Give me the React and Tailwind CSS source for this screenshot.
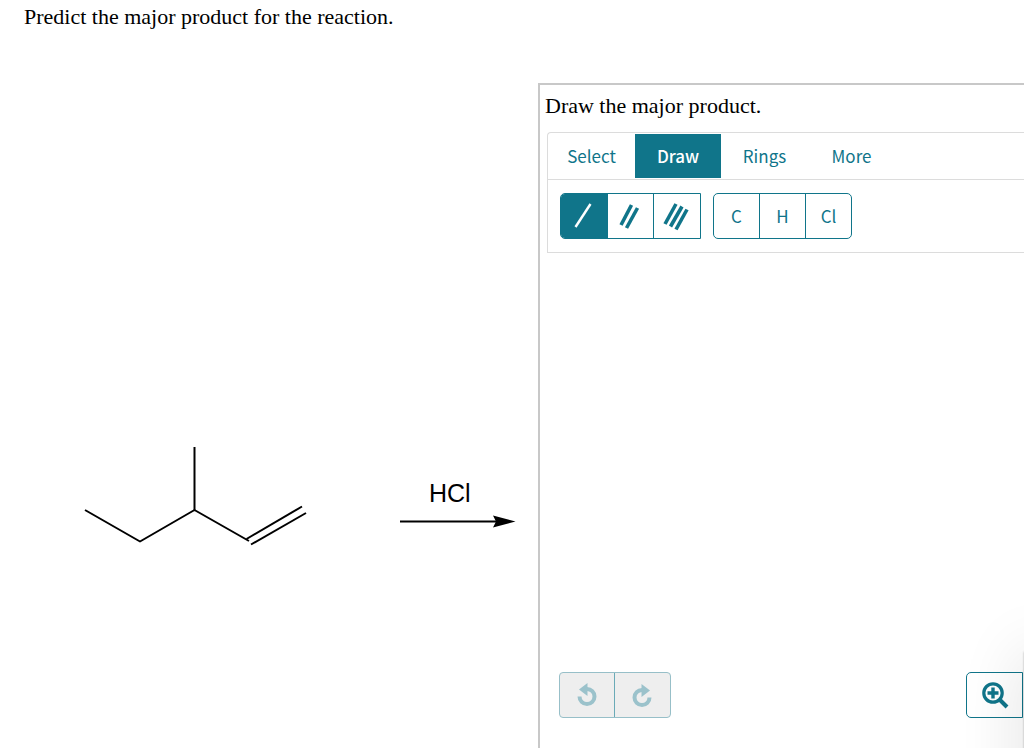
import { useState } from "react";

const tabs = ["Select", "Draw", "Rings", "More"];

const bonds = [
  { name: "Single bond", lines: [[5.5, 27, 20.5, 4]], width: 2.4 },
  { name: "Double bond", lines: [[4, 25, 14.5, 5], [9.5, 28, 20.5, 8]], width: 3.6 },
  { name: "Triple bond", lines: [[2, 24, 13, 4], [7.5, 26.5, 19, 6.5], [13, 29.5, 24, 9.5]], width: 3.6 },
];

const atoms = ["C", "H", "Cl"];

function BondIcon({ lines, width }) {
  return (
    <svg width="28" height="32" viewBox="0 0 28 32" stroke="currentColor" strokeWidth={width} aria-hidden="true">
      {lines.map(([x1, y1, x2, y2]) => (
        <line key={x1} x1={x1} y1={y1} x2={x2} y2={y2} />
      ))}
    </svg>
  );
}

function UndoIcon() {
  return (
    <svg width="20" height="26" viewBox="0 0 20 26" aria-hidden="true">
      <path d="M2.5 14.5 A7.5 7.5 0 1 0 10 7" fill="none" stroke="currentColor" strokeWidth="4" />
      <path d="M2 7.5 L10.5 1 V14 Z" fill="currentColor" />
    </svg>
  );
}

function RedoIcon() {
  return (
    <svg width="20" height="26" viewBox="0 0 20 26" aria-hidden="true">
      <path d="M17.5 15.5 A7.5 7.5 0 1 1 10 8" fill="none" stroke="currentColor" strokeWidth="4" />
      <path d="M18 8.5 L9.5 2 V15 Z" fill="currentColor" />
    </svg>
  );
}

function ZoomInIcon() {
  return (
    <svg width="28" height="28" viewBox="0 0 28 28" fill="none" stroke="currentColor" aria-hidden="true">
      <circle cx="12" cy="12" r="9.2" strokeWidth="3.2" />
      <path d="M12 6.5 V17.5 M6.5 12 H17.5" strokeWidth="3.4" />
      <path d="M18.5 18.5 L26 26" strokeWidth="4" />
    </svg>
  );
}

function Molecule() {
  return (
    <svg
      width="224"
      height="100"
      viewBox="84 446 224 100"
      fill="none"
      stroke="black"
      strokeWidth="2"
      role="img"
      aria-label="3-methylpent-1-ene"
    >
      <path d="M85 510 L140 541.5 L194.5 510 L249 541" strokeLinejoin="round" />
      <path d="M194.5 447 V510" />
      <path d="M246.5 539 L302 506.5" />
      <path d="M251 544.5 L306 513" />
    </svg>
  );
}

function ReactionArrow() {
  return (
    <svg width="116" height="14" viewBox="0 0 116 14" aria-hidden="true">
      <path d="M0 7.5 H98" stroke="black" strokeWidth="2" />
      <path d="M93 1.5 L115.5 7.5 L93 13.5 L96 7.5 Z" fill="black" />
    </svg>
  );
}

export default function App() {
  const [tab, setTab] = useState("Draw");
  const [bond, setBond] = useState("Single bond");

  return (
    <main className="relative flex min-h-screen flex-col overflow-hidden bg-white font-['Liberation_Serif',serif] text-[22px] leading-6 text-black">
      <h1 className="h-[83px] pt-[5px] pl-6">Predict the major product for the reaction.</h1>

      <div className="flex flex-1">
        <section className="flex w-[538px] shrink-0 items-start pt-[363px] pl-[84px]">
          <Molecule />
          <div className="ml-[92px] flex flex-col pt-[34px]">
            <span className="pl-[29px] font-['Liberation_Sans',sans-serif] text-[25px] leading-[26px]">HCl</span>
            <div className="mt-2">
              <ReactionArrow />
            </div>
          </div>
        </section>

        <section className="flex min-w-0 flex-1 flex-col border-t-2 border-l-2 border-[#c8c8c8] pt-[9px] font-['Noto_Sans_CJK_JP',sans-serif] text-[#10758a]">
          <h2 className="pl-[5px] font-['Liberation_Serif',serif] text-black">Draw the major product.</h2>

          <div className="mt-[14px] ml-[7px] rounded-tl border-t border-b border-l border-[#dcdcdc]">
            <nav className="flex border-b border-[#dcdcdc] pt-px pb-px">
              {tabs.map((name) => (
                <button
                  key={name}
                  type="button"
                  onClick={() => setTab(name)}
                  className={`h-11 text-[17px] ${
                    tab === name ? "w-[86px] bg-[#10758a] font-medium text-white" : "w-[87px]"
                  }`}
                >
                  {name}
                </button>
              ))}
            </nav>

            <div className="flex gap-3 py-[13px] pl-3">
              <div className="flex h-[46px] w-[141px] divide-x divide-[#10758a] overflow-hidden rounded-l-[5px] border border-[#10758a]">
                {bonds.map(({ name, lines, width }) => (
                  <button
                    key={name}
                    type="button"
                    aria-label={name}
                    onClick={() => setBond(name)}
                    className={`flex flex-1 items-center justify-center ${
                      bond === name ? "bg-[#10758a] text-white" : ""
                    }`}
                  >
                    <BondIcon lines={lines} width={width} />
                  </button>
                ))}
              </div>

              <div className="flex h-[46px] w-[139px] divide-x divide-[#10758a] rounded-[5px] border border-[#10758a]">
                {atoms.map((atom) => (
                  <button key={atom} type="button" className="flex-1 text-[17px]">
                    {atom}
                  </button>
                ))}
              </div>
            </div>
          </div>

          <div className="flex flex-1 items-end justify-between pb-[30px] pl-[19px]">
            <div className="flex h-[46px] divide-x divide-[#6aaab7] rounded-[4px] border border-[#97bfc8] bg-[#eeeeee] text-[#9bc2cb]">
              <button type="button" disabled aria-label="Undo" className="flex w-[55px] items-center justify-center">
                <UndoIcon />
              </button>
              <button type="button" disabled aria-label="Redo" className="flex w-[55px] items-center justify-center pr-0.5">
                <RedoIcon />
              </button>
            </div>
            <button
              type="button"
              aria-label="Zoom in"
              className="mr-px flex h-[46px] w-[57px] items-center justify-center rounded-l-[5px] border border-[#10758a] bg-white"
            >
              <ZoomInIcon />
            </button>
          </div>
        </section>
      </div>

      {/* shadow cast by a panel that sits past the right edge */}
      <div className="pointer-events-none absolute -right-10 -bottom-20 h-[176px] w-10 shadow-[0_0_64px_rgba(0,0,0,0.14),0_0_2px_rgba(0,0,0,0.3)]" />
    </main>
  );
}
